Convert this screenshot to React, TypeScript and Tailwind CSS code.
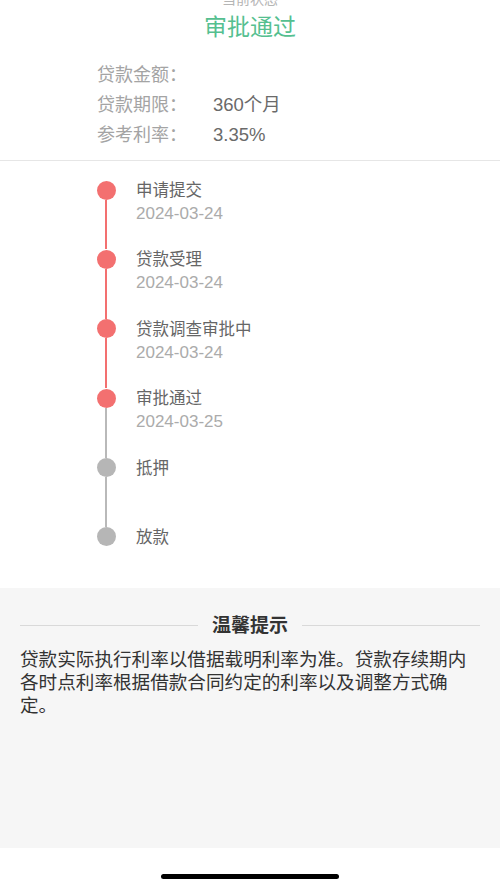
import React from 'react'

type Step = {
  title: string
  date?: string
  done: boolean
  lineDone: boolean
}

const STEPS: Step[] = [
  { title: '申请提交', date: '2024-03-24', done: true, lineDone: true },
  { title: '贷款受理', date: '2024-03-24', done: true, lineDone: true },
  { title: '贷款调查审批中', date: '2024-03-24', done: true, lineDone: true },
  { title: '审批通过', date: '2024-03-25', done: true, lineDone: false },
  { title: '抵押', done: false, lineDone: false },
  { title: '放款', done: false, lineDone: false },
]

const INFO = [
  { label: '贷款金额：', value: '' },
  { label: '贷款期限：', value: '360个月' },
  { label: '参考利率：', value: '3.35%' },
]

const FONT = { fontFamily: '"Liberation Sans", "Noto Sans CJK SC", sans-serif' }

export default function App() {
  return (
    <div className="w-[500px] h-[879px] overflow-hidden bg-white flex flex-col" style={FONT}>
      {/* Status header */}
      <div className="flex flex-col items-center">
        <div className="-mt-[11px] text-[14px] leading-[20px] text-[#b5b5b5]">当前状态</div>
        <div className="mt-[3px] text-[23px] leading-[30px] text-[#55bf90]">审批通过</div>
      </div>

      {/* Loan info */}
      <div className="mt-[18px] pl-[97px]">
        {INFO.map((row) => (
          <div key={row.label} className="flex h-[30px] items-center text-[18px]">
            <span className="w-[116px] text-[#a4a4a4]">{row.label}</span>
            <span className="text-[#6a6a6a] text-[18.5px]">{row.value}</span>
          </div>
        ))}
      </div>

      <div className="mt-[10px] h-px bg-[#e6e6e6]" />

      {/* Timeline */}
      <div className="pt-[19px] pb-[41px]">
        {STEPS.map((step, i) => {
          const last = i === STEPS.length - 1
          return (
            <div key={step.title} className={`flex pl-[96px] ${last ? 'h-[20px]' : 'h-[69.4px]'}`}>
              <div className="w-[20px] flex flex-col items-center">
                <div
                  className={`mt-[0.5px] w-[19px] h-[19px] shrink-0 rounded-full ${
                    step.done ? 'bg-[#f37070]' : 'bg-[#b6b6b6]'
                  }`}
                />
                {!last && (
                  <div className={`w-[2px] flex-1 ${step.lineDone ? 'bg-[#f37070]' : 'bg-[#b9b9b9]'}`} />
                )}
              </div>
              <div className="ml-[20px]">
                <div className="text-[16.5px] leading-[20px] text-[#666666]">{step.title}</div>
                {step.date && (
                  <div className="mt-[4px] text-[17px] leading-[20px] text-[#ababab]">{step.date}</div>
                )}
              </div>
            </div>
          )
        })}
      </div>

      {/* Tips */}
      <div className="h-[261px] bg-[#f6f6f6] px-[20px] pt-[25px]">
        <div className="flex items-center">
          <div className="flex-1 h-px bg-[#d9d9d9]" />
          <div className="mx-[14px] text-[19px] leading-[26px] font-bold text-[#333333]">温馨提示</div>
          <div className="flex-1 h-px bg-[#d9d9d9]" />
        </div>
        <p className="mt-[9.5px] text-[18.6px] leading-[23px] text-[#333333]">
          贷款实际执行利率以借据载明利率为准。贷款存续期内各时点利率根据借款合同约定的利率以及调整方式确定。
        </p>
      </div>

      {/* Home indicator */}
      <div className="flex-1 flex justify-center">
        <div className="mt-[26px] w-[178px] h-[5px] rounded-full bg-black" />
      </div>
    </div>
  )
}
